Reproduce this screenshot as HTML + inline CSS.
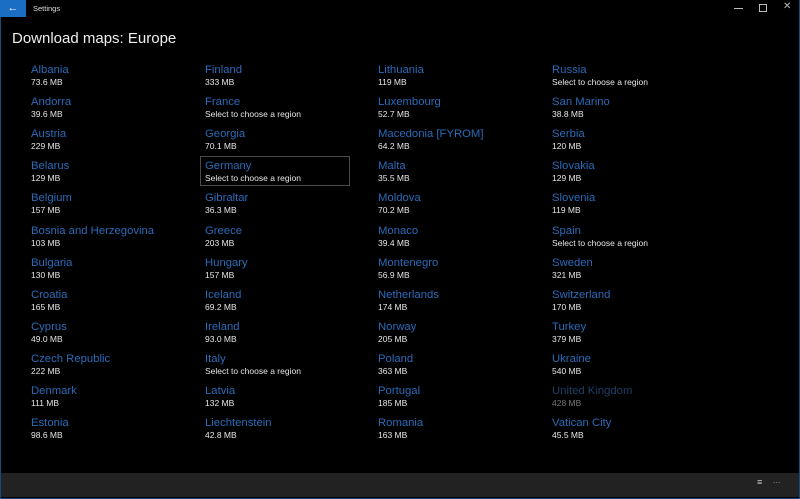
<!DOCTYPE html>
<html><head><meta charset="utf-8"><style>
html,body{margin:0;padding:0;background:#000;width:800px;height:499px;overflow:hidden;font-family:"Liberation Sans",sans-serif;}
.win{position:absolute;left:0;top:0;border-left:1px solid #164a78;border-bottom:1px solid #164a78;border-right:1px solid #164a78;box-sizing:border-box;width:800px;height:499px;}
.back{position:absolute;left:0;top:0;width:26px;height:17px;background:#1a6fc4;color:#fff;font-size:11px;text-align:center;line-height:16px;}
.ttl{position:absolute;left:33px;top:4px;font-size:7.5px;color:#ddd;}
h1{position:absolute;left:12px;top:30px;margin:0;font-weight:normal;font-size:15px;color:#eee;}
.it{position:absolute;width:150px;}
.n{font-size:11.3px;color:#2a6bb8;line-height:14px;white-space:nowrap;}
.s{font-size:8.5px;color:#e6e6e6;line-height:10px;white-space:nowrap;}
.dim .n{color:#1f4068}.dim .s{color:#777}
.sel{position:absolute;left:200px;top:156px;width:150px;height:30px;border:1px solid #4a4a4a;box-sizing:border-box;}
.bar{position:absolute;left:1px;top:473px;width:798px;height:24px;background:#222;}
</style></head><body>
<div class="win"></div>
<div class="back">&#8592;</div>
<div class="ttl">Settings</div>
<div style="position:absolute;left:734px;top:8px;width:9px;height:1px;background:#bbb"></div>
<div style="position:absolute;left:759px;top:4px;width:6px;height:6px;border:1px solid #bbb"></div>
<div style="position:absolute;left:783px;top:1px;color:#bbb;font-size:10px">&#10005;</div>
<h1>Download maps: Europe</h1>
<div class="sel"></div>
<div id="c"></div>
<div class="bar"><span style="position:absolute;left:756px;top:4px;color:#ccc;font-size:9px;">&#8801;</span><span style="position:absolute;left:772px;top:2px;color:#888;font-size:9px;">...</span></div>
<script>
var cols=[[31,["Albania","73.6 MB"],["Andorra","39.6 MB"],["Austria","229 MB"],["Belarus","129 MB"],["Belgium","157 MB"],["Bosnia and Herzegovina","103 MB"],["Bulgaria","130 MB"],["Croatia","165 MB"],["Cyprus","49.0 MB"],["Czech Republic","222 MB"],["Denmark","111 MB"],["Estonia","98.6 MB"]],
[205,["Finland","333 MB"],["France","Select to choose a region"],["Georgia","70.1 MB"],["Germany","Select to choose a region"],["Gibraltar","36.3 MB"],["Greece","203 MB"],["Hungary","157 MB"],["Iceland","69.2 MB"],["Ireland","93.0 MB"],["Italy","Select to choose a region"],["Latvia","132 MB"],["Liechtenstein","42.8 MB"]],
[378,["Lithuania","119 MB"],["Luxembourg","52.7 MB"],["Macedonia [FYROM]","64.2 MB"],["Malta","35.5 MB"],["Moldova","70.2 MB"],["Monaco","39.4 MB"],["Montenegro","56.9 MB"],["Netherlands","174 MB"],["Norway","205 MB"],["Poland","363 MB"],["Portugal","185 MB"],["Romania","163 MB"]],
[552,["Russia","Select to choose a region"],["San Marino","38.8 MB"],["Serbia","120 MB"],["Slovakia","129 MB"],["Slovenia","119 MB"],["Spain","Select to choose a region"],["Sweden","321 MB"],["Switzerland","170 MB"],["Turkey","379 MB"],["Ukraine","540 MB"],["United Kingdom","428 MB"],["Vatican City","45.5 MB"]]];
var h="";cols.forEach(function(c){for(var i=1;i<c.length;i++){var y=63+(i-1)*32.1;var d=c[i][0]=="United Kingdom"?" dim":"";h+='<div class="it'+d+'" style="left:'+c[0]+'px;top:'+y+'px"><div class="n">'+c[i][0]+'</div><div class="s">'+c[i][1]+'</div></div>';}});
document.getElementById("c").innerHTML=h;
</script>
</body></html>
